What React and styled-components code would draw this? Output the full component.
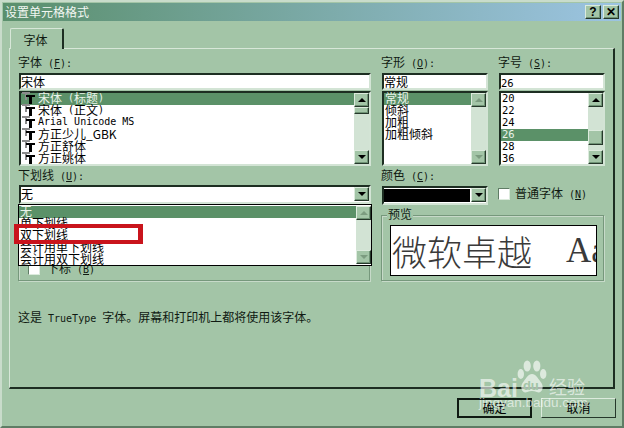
import styled, { createGlobalStyle } from 'styled-components';

const GlobalStyle = createGlobalStyle`
    html, body {
        margin: 0;
        background: #a3c5a7;
    }
    * {
        box-sizing: border-box;
    }
`;

const BG = '#a3c5a7';
const SEL = '#5b9168';
const SUNKEN = `
    border: 2px solid;
    border-color: #1d2e22 #d3e4d5 #d3e4d5 #1d2e22;
`;
const RAISED = `
    background: ${BG};
    border: 1px solid;
    border-color: #dcebdd #26382b #26382b #dcebdd;
    box-shadow: inset -1px -1px 0 #6f9375;
`;

const Window = styled.div`
    position: relative;
    width: 624px;
    height: 428px;
    padding: 1px;
    overflow: hidden;
    background: ${BG};
    border: 2px solid;
    border-color: #c9dccb #5f7d65 #5f7d65 #c9dccb;
    color: #101a12;
    font: 12px/14px "Noto Sans CJK SC", sans-serif;
`;

const TitleBar = styled.div`
    display: flex;
    align-items: center;
    height: 18px;
    padding: 0 2px;
    color: #f2f7f2;
    background: linear-gradient(90deg, #5a8f6c, #9cc4e2);
`;

const TitleText = styled.span`
    flex: 1;
`;

const TitleButton = styled.div`
    ${RAISED}
    display: flex;
    align-items: center;
    justify-content: center;
    width: 16px;
    height: 14px;
    margin-left: 2px;
    color: #000;
    font: bold 12px/12px "Liberation Sans", sans-serif;
`;

const TabStrip = styled.div`
    display: flex;
    margin: 7px 0 0 7px;
    height: 20px;
`;

const Tab = styled.div`
    width: 54px;
    height: 21px;
    padding: 4px 2px 0 0;
    text-align: center;
    background: ${BG};
    border-top: 1px solid #d7e7d8;
    border-left: 1px solid #d7e7d8;
    border-right: 2px solid #1d2e22;
    border-radius: 2px 2px 0 0;
    position: relative;
    z-index: 1;
`;

const Panel = styled.div`
    width: 606px;
    height: 341px;
    margin-left: 6px;
    padding: 7px 0 0 8px;
    border: 1px solid #d7e7d8;
    border-right: 2px solid #1d2e22;
    border-bottom: 2px solid #1d2e22;
`;

const Columns = styled.div`
    display: grid;
    grid-template-columns: 354px 108px 108px;
    column-gap: 9px;
    row-gap: 3px;
`;

const Label = styled.div`
    height: 14px;
    margin-bottom: ${(p) => p.$gap ?? 3}px;
    line-height: 12px;
    white-space: nowrap;
`;

const Latin = styled.span`
    font: ${(p) => p.$size ?? 10}px/12px "DejaVu Sans Mono", monospace;
`;

const Input = styled.div`
    ${SUNKEN}
    height: 17px;
    margin: 0 1px 1px 1px;
    background: #fff;
    color: #000;
    line-height: 13px;
`;

const ListBox = styled.div`
    ${SUNKEN}
    display: flex;
    height: 75px;
    margin: 0 1px;
    background: #fff;
`;

const Rows = styled.div`
    flex: 1;
    min-width: 0;
`;

const Row = styled.div`
    display: flex;
    align-items: center;
    height: 12px;
    padding: 0 0 2px 1px;
    line-height: 12px;
    white-space: pre;
    color: ${(p) => (p.$selected ? '#eaf3ea' : '#000')};
    background: ${(p) => (p.$selected ? SEL : 'transparent')};
`;

const ScrollBar = styled.div`
    display: flex;
    flex-direction: column;
    flex: none;
    width: 15px;
    background: #d2e3d4;
`;

const ScrollTrack = styled.div`
    flex: 1;
    padding-top: ${(p) => p.$thumb ?? 0}px;
`;

const ScrollThumb = styled.div`
    ${RAISED}
    height: ${(p) => p.$size}px;
`;

const ScrollButton = styled.div`
    ${RAISED}
    display: flex;
    align-items: center;
    justify-content: center;
    width: 15px;
    height: 14px;
    flex: none;

    &::after {
        content: '';
        border-left: 4px solid transparent;
        border-right: 4px solid transparent;
        border-top: ${(p) => (p.$down ? `4px solid ${p.$off ? '#7c9c80' : '#000'}` : 'none')};
        border-bottom: ${(p) => (p.$down ? 'none' : `4px solid ${p.$off ? '#7c9c80' : '#000'}`)};
    }
`;

const Lower = styled.div`
    position: relative;
`;

const Select = styled.div`
    ${SUNKEN}
    display: flex;
    height: 19px;
    margin: 0 1px;
    background: #fff;
    color: #000;
    line-height: 14px;
`;

const SelectText = styled.div`
    flex: 1;
`;

const Group = styled.div`
    position: relative;
    display: flex;
    align-items: flex-end;
    height: ${(p) => p.$height}px;
    margin-top: ${(p) => p.$top}px;
    width: ${(p) => p.$width}px;
    border: 1px solid #76987c;
    box-shadow: 1px 1px 0 #c7dac9, inset 1px 1px 0 #c7dac9;
`;

const Legend = styled.div`
    position: absolute;
    top: -9px;
    left: 5px;
    padding: 0 1px;
    background: ${BG};
`;

const CheckRow = styled.div`
    display: flex;
    align-items: center;
    gap: ${(p) => p.$gap ?? 7}px;
    padding-left: ${(p) => p.$indent ?? 0}px;
    margin-bottom: ${(p) => p.$bottom ?? 0}px;
`;

const Check = styled.div`
    width: 12px;
    height: 12px;
    background: #fff;
    border: 1px solid;
    border-color: #5f7d65 #dcebdd #dcebdd #5f7d65;
`;

const Popup = styled.div`
    position: absolute;
    top: 35px;
    left: 0;
    display: flex;
    width: 354px;
    height: 62px;
    padding: 1px 0;
    background: #fff;
    border: 1px solid #000;
    z-index: 2;
`;

const RedBox = styled.div`
    position: absolute;
    top: 55px;
    left: -4px;
    width: 129px;
    height: 20px;
    border: 4px solid #c9141c;
    border-left-width: 5px;
    border-right-width: 5px;
    z-index: 3;
`;

const LowerRight = styled.div`
    grid-column: span 2;
`;

const ColorRow = styled.div`
    display: grid;
    grid-template-columns: 108px 1fr;
    column-gap: 9px;
    align-items: start;
`;

const Swatch = styled.div`
    flex: 1;
    margin: 1px 1px 1px 0;
    background: #000;
`;

const PreviewBox = styled.div`
    display: flex;
    align-items: center;
    width: 207px;
    height: 51px;
    margin: 0 0 4px 8px;
    padding-left: 1px;
    overflow: hidden;
    background: #fff;
    border: 1px solid #000;
    color: #3a3a3a;
    font-size: 35px;
    font-weight: 300;
    line-height: 49px;
    white-space: nowrap;
`;

const PreviewLatin = styled.span`
    margin-left: 34px;
    font: 35px/49px "Liberation Serif", serif;
`;

const Hint = styled.div`
    margin-top: 29px;
    white-space: nowrap;
`;

const Footer = styled.div`
    display: flex;
    justify-content: flex-end;
    gap: 9px;
    margin: 9px 5px 0 0;
`;

const Button = styled.div`
    display: flex;
    align-items: center;
    justify-content: center;
    width: 75px;
    height: 20px;
    color: #000;
    border: ${(p) => (p.$primary ? '2px solid #0f1a12' : '1px solid')};
    border-color: ${(p) => (p.$primary ? '#0f1a12' : '#dcebdd #26382b #26382b #dcebdd')};
`;

const Watermark = styled.div`
    position: absolute;
    top: 358px;
    left: 477px;
    color: rgba(255, 255, 255, 0.62);
    pointer-events: none;
    z-index: 4;
`;

const MarkRow = styled.div`
    display: flex;
    align-items: flex-end;
    height: 35px;
`;

const MarkBai = styled.span`
    margin-bottom: -3px;
    font: bold 25px/20px "Liberation Sans", sans-serif;
`;

const Paw = styled.div`
    position: relative;
    width: 32px;
    height: 35px;
    margin-left: -2px;
`;

const MarkDu = styled.span`
    position: absolute;
    left: 7px;
    top: 19px;
    color: #a3c5a7;
    font: bold 13px/14px "Liberation Sans", sans-serif;
`;

const MarkJing = styled.span`
    margin: 0 0 -1px 1px;
    font-size: 18px;
    line-height: 20px;
`;

const MarkUrl = styled.div`
    margin-top: 1px;
    font: 13.5px/14px "Liberation Sans", sans-serif;
`;

const TTIcon = () => (
    <svg width="14" height="12" viewBox="0 0 14 12" style={{ flex: 'none', marginRight: 2 }}>
        <path d="M0 0h8v2H5v6H3V2H0z" fill="#8b8b8b" />
        <path d="M4 3h9v2H10v7H7V5H4z" fill="#000" />
    </svg>
);

const PawIcon = () => (
    <svg width="32" height="35" viewBox="0 0 40 35" preserveAspectRatio="none" fill="rgba(255,255,255,0.62)">
        <ellipse cx="6" cy="14" rx="4" ry="5" />
        <ellipse cx="14" cy="6" rx="4.5" ry="5.5" />
        <ellipse cx="26" cy="6" rx="4.5" ry="5.5" />
        <ellipse cx="34" cy="14" rx="4" ry="5" />
        <path d="M20 14c-5 0-7 4-10 7-3 3-4 5-3 8 1 3 4 4 7 3 2-.6 4-1 6-1s4 .4 6 1c3 1 6 0 7-3 1-3 0-5-3-8-3-3-5-7-10-7z" />
    </svg>
);

const fonts = [
    ['宋体', '标题'],
    ['宋体', '正文'],
    ['Arial Unicode MS'],
    ['方正少儿_GBK'],
    ['方正舒体'],
    ['方正姚体'],
];

const Mnemonic = ({ text, letter }) => (
    <>
        {text}<Latin> (<u>{letter}</u>):</Latin>
    </>
);

const Scroll = ({ thumb, size, off }) => (
    <ScrollBar>
        <ScrollButton $off={off} />
        <ScrollTrack $thumb={thumb}>{size ? <ScrollThumb $size={size} /> : null}</ScrollTrack>
        <ScrollButton $down $off={off} />
    </ScrollBar>
);

const App = () => {
    return (
        <Window>
            <GlobalStyle />
            <TitleBar>
                <TitleText>设置单元格格式</TitleText>
                <TitleButton>?</TitleButton>
                <TitleButton>✕</TitleButton>
            </TitleBar>
            <TabStrip>
                <Tab>字体</Tab>
            </TabStrip>
            <Panel>
                <Columns>
                    <div>
                        <Label><Mnemonic text="字体" letter="F" /></Label>
                        <Input>宋体</Input>
                        <ListBox>
                            <Rows>
                                {fonts.map(([name, extra], i) => (
                                    <Row key={name + i} $selected={i === 0}>
                                        <TTIcon />
                                        {/^[A-Z]/.test(name) ? <Latin>{name}</Latin> : name}
                                        {extra ? <><Latin> (</Latin>{extra}<Latin>)</Latin></> : null}
                                    </Row>
                                ))}
                            </Rows>
                            <Scroll thumb={0} size={7} />
                        </ListBox>
                    </div>
                    <div>
                        <Label><Mnemonic text="字形" letter="O" /></Label>
                        <Input>常规</Input>
                        <ListBox>
                            <Rows>
                                {['常规', '倾斜', '加粗', '加粗倾斜'].map((s, i) => (
                                    <Row key={s} $selected={i === 0}>{s}</Row>
                                ))}
                            </Rows>
                            <Scroll off />
                        </ListBox>
                    </div>
                    <div>
                        <Label><Mnemonic text="字号" letter="S" /></Label>
                        <Input><Latin $size={10.5}>26</Latin></Input>
                        <ListBox>
                            <Rows>
                                {['20', '22', '24', '26', '28', '36'].map((s) => (
                                    <Row key={s} $selected={s === '26'}><Latin $size={10.5}>{s}</Latin></Row>
                                ))}
                            </Rows>
                            <Scroll thumb={23} size={15} />
                        </ListBox>
                    </div>
                    <Lower>
                        <Label $gap={2}><Mnemonic text="下划线" letter="U" /></Label>
                        <Select>
                            <SelectText>无</SelectText>
                            <ScrollButton $down />
                        </Select>
                        <Group $width={352} $height={71} $top={6}>
                            <CheckRow $indent={9} $bottom={4}>
                                <Check />
                                <span>下标<Latin> (<u>B</u>)</Latin></span>
                            </CheckRow>
                        </Group>
                        <Popup>
                            <Rows>
                                {['无', '单下划线', '双下划线', '会计用单下划线', '会计用双下划线'].map((s, i) => (
                                    <Row key={s} $selected={i === 0}>{s}</Row>
                                ))}
                            </Rows>
                            <Scroll off />
                        </Popup>
                        <RedBox />
                    </Lower>
                    <LowerRight>
                        <Label $gap={3}><Mnemonic text="颜色" letter="C" /></Label>
                        <ColorRow>
                            <Select>
                                <Swatch />
                                <ScrollButton $down />
                            </Select>
                            <CheckRow $gap={5}>
                                <Check />
                                <span>普通字体<Latin> (<u>N</u>)</Latin></span>
                            </CheckRow>
                        </ColorRow>
                        <Group $width={223} $height={66} $top={10}>
                            <Legend>预览</Legend>
                            <PreviewBox>
                                微软卓越
                                <PreviewLatin>Aa</PreviewLatin>
                            </PreviewBox>
                        </Group>
                    </LowerRight>
                </Columns>
                <Hint>
                    这是<Latin> TrueType </Latin>字体。屏幕和打印机上都将使用该字体。
                </Hint>
            </Panel>
            <Footer>
                <Button $primary>确定</Button>
                <Button>取消</Button>
            </Footer>
            <Watermark>
                <MarkRow>
                    <MarkBai>Bai</MarkBai>
                    <Paw>
                        <PawIcon />
                        <MarkDu>du</MarkDu>
                    </Paw>
                    <MarkJing>经验</MarkJing>
                </MarkRow>
                <MarkUrl>jingyan.baidu.com</MarkUrl>
            </Watermark>
        </Window>
    );
};

export default App;
